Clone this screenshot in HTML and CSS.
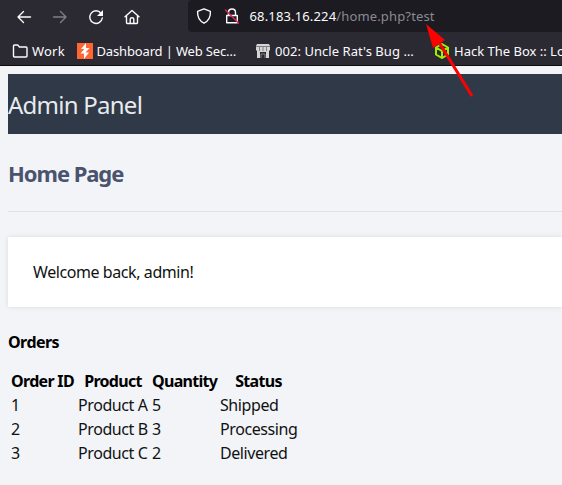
FILE: index.html
```
<!DOCTYPE html>
<html lang="en">
<head>
<meta charset="utf-8">
<title>Home Page</title>
<link rel="stylesheet" href="styles.css">
</head>
<body>
<header class="browser">
  <div class="toolbar">
    <nav class="nav-icons">
      <svg class="icon" width="16" height="16" viewBox="0 0 16 16"><path d="M14.500 8H2M7.500 2.500 2 8l5.500 5.500"/></svg>
      <svg class="icon disabled" width="16" height="16" viewBox="0 0 16 16"><path d="M1.500 8H14M8.500 2.500 14 8l-5.500 5.500"/></svg>
      <svg class="icon" width="16" height="16" viewBox="0 0 16 16"><path d="M13 4.200A6.300 6.300 0 1 0 14.300 9"/><path class="solid" d="M15 1v6H9z"/></svg>
      <svg class="icon" width="16" height="16" viewBox="0 0 16 16"><path d="M1 7.700 8 1.500l7 6.200M2.500 6.700v7.100q0 .7.700.7h9.600q.7 0 .7-.7V6.700M6.200 14v-4q0-1.200 1.800-1.200T9.800 10v4"/></svg>
    </nav>
    <div class="address">
      <svg class="icon" width="16" height="16" viewBox="0 0 16 16"><path d="M8 .8 14.400 3.400C14.700 8.500 12.500 13 8 15.200 3.500 13 1.300 8.500 1.600 3.400Z"/></svg>
      <svg class="icon lock" width="16" height="16" viewBox="0 0 16 16"><path d="M4.500 7.500V4.500Q4.500 1 8 1t3.500 3.500v3M2.700 7.500h10.600v7.300H2.700z"/><path class="slash" d="m1.500 2 13 13"/></svg>
      <div class="url"><span class="host">68.183.16.224</span><span class="path">/home.php?test</span></div>
    </div>
  </div>
  <div class="bookmarks">
    <div class="bookmark work"><svg class="icon" width="16" height="16" viewBox="0 0 16 16"><path d="M1.500 13V3q0-1 1-1h3.200L7.500 4H14q1 0 1 1v8q0 1-1 1H2.500q-1 0-1-1z"/></svg><span>Work</span></div>
    <div class="bookmark dashboard"><svg width="16" height="16" viewBox="0 0 16 16"><path fill="#ff6633" d="M0 0h16v16H0z"/><path fill="#fff" d="M9 0v5h3.500L8.500 9.500H12L7 16v-5.500H3.500L7.300 6H4z"/></svg><span>Dashboard | Web Sec…</span></div>
    <div class="bookmark uncle"><svg width="16" height="16" viewBox="0 0 16 16"><path fill="#d5d5d5" d="M2 1h12l1 2v4l-1 1v7h-3V9H5v6H2V8L1 7V3z"/><path stroke="#828282" d="M1 3.500h14M4.500 4v4M8 4v4M11.500 4v4M6 15v-4h4v4" fill="none"/></svg><span>002: Uncle Rat's Bug …</span></div>
    <div class="bookmark box"><svg width="16" height="16" viewBox="0 0 16 16"><path d="m8 1 6 3.500v7L8 15l-6-3.500v-7zM2 4.500 8 8l6-3.500M8 8v7" fill="none" stroke="#9fef00" stroke-width="2"/></svg><span>Hack The Box :: Lo</span></div>
  </div>
</header>
<main class="page">
  <div class="banner"><span>Admin Panel</span></div>
  <h2><span>Home Page</span></h2>
  <section class="welcome"><span>Welcome back, admin!</span></section>
  <h3>Orders</h3>
  <table>
    <colgroup><col class="c-id"><col class="c-product"><col class="c-quantity"><col class="c-status"></colgroup>
    <thead><tr><th>Order ID</th><th>Product</th><th>Quantity</th><th>Status</th></tr></thead>
    <tbody>
      <tr><td>1</td><td>Product A</td><td>5</td><td>Shipped</td></tr>
      <tr><td>2</td><td>Product B</td><td>3</td><td>Processing</td></tr>
      <tr><td>3</td><td>Product C</td><td>2</td><td>Delivered</td></tr>
    </tbody>
  </table>
</main>
<svg class="pointer" width="50" height="76" viewBox="0 0 50 76"><path d="M46 72 14 20" stroke="#f00" stroke-width="3"/><path d="m0 0 19 16L7 24z" fill="#f00"/></svg>
</body>
</html>
```

FILE: styles.css
```
* { box-sizing: border-box; }
body {
  margin: 0;
  height: 485px;
  overflow: hidden;
  position: relative;
  background: #f2f4f8;
  color: #111;
  font: 16px/22px "Noto Sans", sans-serif;
  letter-spacing: -.42px;
}
svg { display: block; flex: none; }
.browser {
  height: 66px;
  background: #2b2a33;
  border-bottom: 1px solid #0c0c0d;
  color: #fbfbfe;
  font-size: 13px;
  line-height: 18px;
  letter-spacing: 0;
}
.toolbar { display: flex; height: 32px; }
.nav-icons { display: flex; gap: 20px; width: 188px; padding: 9px 0 0 16px; }
.icon { fill: none; stroke: #fbfbfe; stroke-width: 1.4; stroke-linecap: round; stroke-linejoin: round; }
.disabled { opacity: .4; }
.icon .solid { fill: #fbfbfe; stroke: none; }
.icon .slash { stroke: #e22850; }
.address {
  display: flex;
  flex: 1;
  align-items: center;
  background: #1c1b22;
  border-radius: 4px 0 0 4px;
  padding-left: 8px;
}
.lock { margin-left: 12px; }
.url { margin-left: 9.500px; white-space: nowrap; letter-spacing: .15px; }
.path { color: #8b8a91; }
.bookmarks { display: flex; padding-top: 10px; white-space: nowrap; overflow: hidden; }
.bookmark { display: flex; flex: none; align-items: center; gap: 4px; height: 18px; }
.work { width: 77px; padding-left: 12px; letter-spacing: .2px; }
.dashboard { width: 178px; gap: 3.500px; letter-spacing: -.15px; }
.uncle { width: 179px; letter-spacing: .05px; }
.page { padding: 8px 0 0 8px; }
.banner { height: 60px; padding-top: 14px; background: #2f3947; color: #e8eaed; font-size: 24px; line-height: 33px; letter-spacing: -.75px; }
h2 {
  height: 78px;
  margin: 0 0 25px;
  padding-top: 24px;
  border-bottom: 1px solid #dee1e6;
  color: #4a536e;
  font-size: 22px;
  line-height: 30px;
  letter-spacing: -1.050px;
}
.welcome { height: 70px; padding: 24px 25px; background: #fff; box-shadow: 0 0 5px rgb(0 0 0 / 10%); }
h3 { margin: 24px 0 15px; color: #000; font-size: 16px; line-height: 22px; letter-spacing: -.55px; }
table { table-layout: fixed; width: 292px; border-collapse: separate; border-spacing: 2px; }
th, td { padding: 0 1px; height: 22px; text-align: left; white-space: nowrap; }
th { color: #000; text-align: center; letter-spacing: -.7px; }
.c-id { width: 65px; }
.c-product { width: 72px; }
.c-quantity { width: 66px; }
.c-status { width: 79px; }
.pointer { position: absolute; left: 426px; top: 24px; }
```
